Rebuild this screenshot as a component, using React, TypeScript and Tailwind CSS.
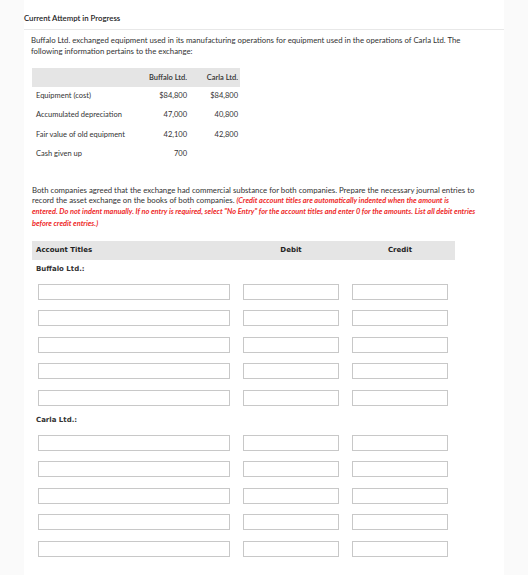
const FILAS = [
  { cuenta: 'Equipment (cost)', buffalo: '$84,800', carla: '$84,800' },
  { cuenta: 'Accumulated depreciation', buffalo: '47,000', carla: '40,800' },
  { cuenta: 'Fair value of old equipment', buffalo: '42,100', carla: '42,800' },
  { cuenta: 'Cash given up', buffalo: '700', carla: '' },
]

const lato = { fontFamily: 'Lato, "Noto Sans", sans-serif' }
const verdana = { fontFamily: '"DejaVu Sans", Verdana, sans-serif' }

function FilaAsiento() {
  return (
    <div className="flex h-[16px] pl-[6px]">
      <input className="h-[16px] w-[192px] border border-[#c8c8c8] bg-white outline-none" />
      <input className="ml-[13px] h-[16px] w-[96px] border border-[#c8c8c8] bg-white outline-none" />
      <input className="ml-[13px] h-[16px] w-[96px] border border-[#c8c8c8] bg-white outline-none" />
    </div>
  )
}

function Bloque({ titulo }: { titulo: string }) {
  return (
    <>
      <div className="pl-[4px] text-[7px] font-bold leading-[10px] text-[#333]" style={verdana}>
        {titulo}
      </div>
      <div className="mt-[10px] flex flex-col gap-[10.5px]">
        {[0, 1, 2, 3, 4].map((i) => (
          <FilaAsiento key={i} />
        ))}
      </div>
    </>
  )
}

function App() {
  return (
    <div className="min-h-[575px] w-full bg-[#fafafa]" style={lato}>
      <div className="ml-[24px] min-h-[575px] w-[480px] bg-white text-[#333]">
        <div className="h-[30px] border-b border-[#e8e8e8] pt-[13px] text-[7.8px] font-semibold leading-[10px] text-[#222]">
          Current Attempt in Progress
        </div>

        <p className="ml-[7px] mr-[30px] pt-[5px] text-[7.8px] leading-[11px]">
          Buffalo Ltd. exchanged equipment used in its manufacturing operations for equipment used in the operations of Carla Ltd. The following information pertains to the exchange:
        </p>

        <div className="ml-[8px] mt-[11px] w-[208px] text-[7.5px]">
          <div className="grid h-[19px] grid-cols-[108px_49px_51px] items-center bg-[#e5e5e5] font-semibold">
            <span />
            <span className="pr-[2px] text-right">Buffalo Ltd.</span>
            <span className="pr-[2px] text-right">Carla Ltd.</span>
          </div>
          {FILAS.map((f) => (
            <div key={f.cuenta} className="grid h-[19.5px] grid-cols-[108px_49px_51px] items-center pb-[3px]">
              <span className="pl-[4px]">{f.cuenta}</span>
              <span className="pr-[2px] text-right">{f.buffalo}</span>
              <span className="pr-[2px] text-right">{f.carla}</span>
            </div>
          ))}
        </div>

        <p className="ml-[8px] mr-[8px] mt-[20px] text-[7.8px] leading-[10.2px]">
          Both companies agreed that the exchange had commercial substance for both companies. Prepare the necessary journal entries to record the asset exchange on the books of both companies.{' '}
          <span className="text-[7.4px] font-bold italic text-[#ee2a2a]">
            (Credit account titles are automatically indented when the amount is
            <br />
            entered. Do not indent manually. If no entry is required, select "No Entry" for the account titles and enter 0 for the amounts. List all debit entries before credit entries.)
          </span>
        </p>

        <div className="ml-[8px] mt-[12px] w-[423px] pb-[20px]">
          <div
            className="flex h-[19px] items-center bg-[#e5e5e5] text-[7px] font-bold text-[#222]"
            style={verdana}
          >
            <span className="w-[211px] pl-[4px]">Account Titles</span>
            <span className="w-[96px] text-center">Debit</span>
            <span className="ml-[13px] w-[96px] text-center">Credit</span>
          </div>
          <div className="mt-[4px]">
            <Bloque titulo="Buffalo Ltd.:" />
          </div>
          <div className="mt-[9px]">
            <Bloque titulo="Carla Ltd.:" />
          </div>
        </div>
      </div>
    </div>
  )
}

export default App
